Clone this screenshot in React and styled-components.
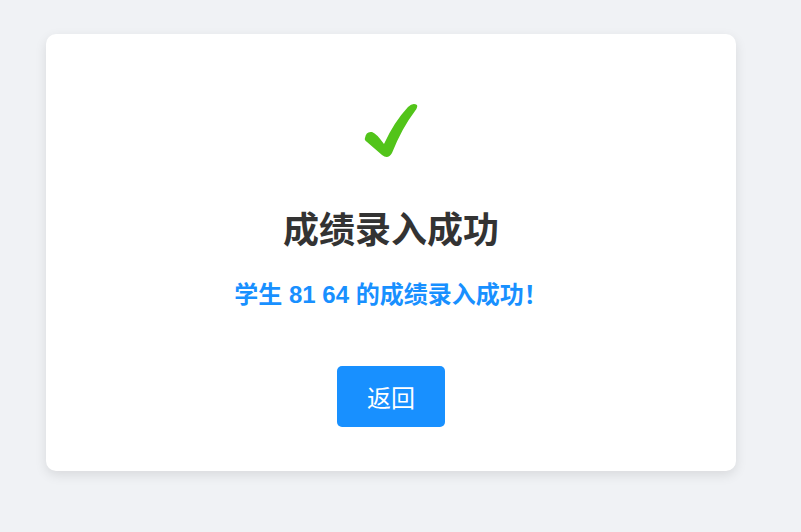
import styled, { createGlobalStyle } from 'styled-components'

const GlobalStyle = createGlobalStyle`
    html, body {
        margin: 0;
        padding: 0;
        background-color: #f0f2f5;
        font-family: "Liberation Sans", "Noto Sans CJK SC", sans-serif;
    }
`;

const Page = styled.div`
    min-height: 532px;
    padding: 34px 0 0 46px;
    box-sizing: border-box;
`;

const Card = styled.div`
    width: 690px;
    height: 437px;
    box-sizing: border-box;
    background-color: #fff;
    border-radius: 10px;
    box-shadow: 0 4px 12px rgba(0, 0, 0, 0.1);
    display: flex;
    flex-direction: column;
    align-items: center;
    padding-top: 64px;
`;

const Check = styled.svg`
    display: block;
    width: 62px;
    height: 62px;
`;

const Title = styled.h1`
    margin: 46px 0 0;
    font-size: 36px;
    line-height: 50px;
    font-weight: bold;
    color: #333;
`;

const Message = styled.p`
    margin: 23px 0 0;
    font-size: 24px;
    line-height: 32px;
    font-weight: bold;
    color: #1890ff;
`;

const BackButton = styled.button`
    margin-top: 55px;
    padding: 0 30px;
    height: 61px;
    border: none;
    border-radius: 5px;
    background-color: #1890ff;
    color: #fff;
    font-family: inherit;
    font-size: 24px;
    cursor: pointer;
`;

const App = () => {
    return (
        <Page>
            <GlobalStyle />
            <Card>
                <Check viewBox="0 0 62 62">
                    {/* brush style check, thicker at the bottom */}
                    <path
                        d="M5 40 Q6 33 12 34 Q16 35 24 46 Q34 24 48 9 Q53 4 57 7 Q58 9 55 13 Q42 30 32 55 Q28 62 22 57 L7 44 Q4 42 5 40 Z"
                        fill="#52c41a"
                    />
                </Check>
                <Title>成绩录入成功</Title>
                <Message>学生 81 64 的成绩录入成功！</Message>
                <BackButton>返回</BackButton>
            </Card>
        </Page>
    )
}

export default App
